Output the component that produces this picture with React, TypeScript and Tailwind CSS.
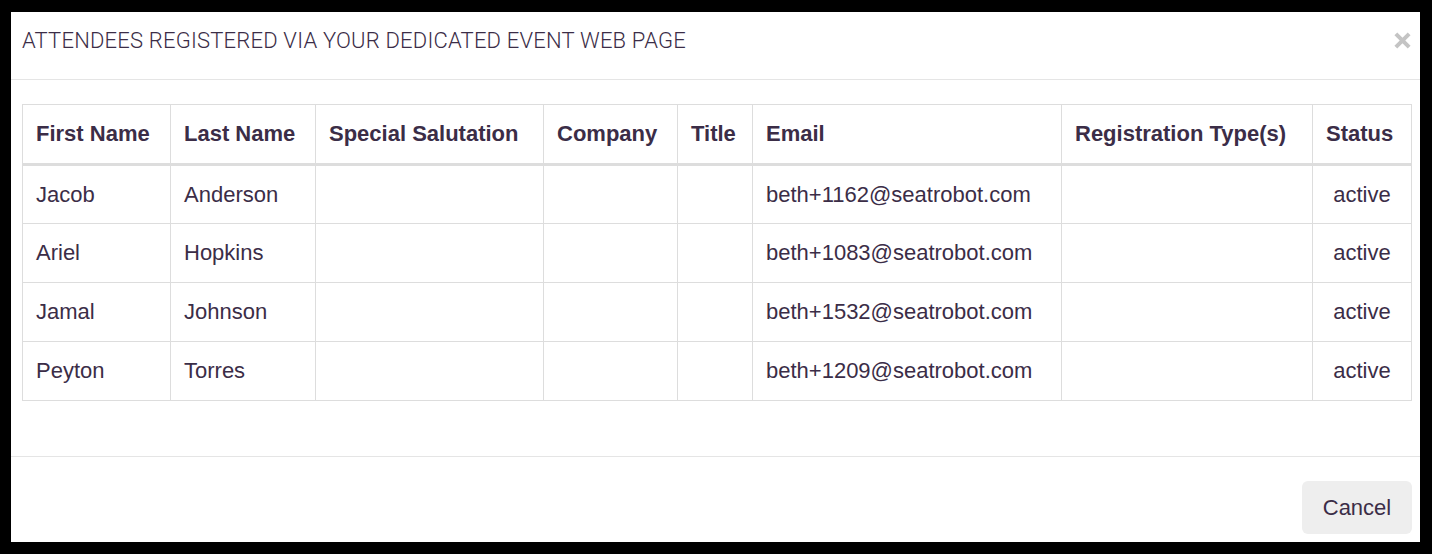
import React from "react"

const columns = [
  { label: "First Name", w: "w-[148px]" },
  { label: "Last Name", w: "w-[145px]" },
  { label: "Special Salutation", w: "w-[228px]" },
  { label: "Company", w: "w-[134px]" },
  { label: "Title", w: "w-[75px]" },
  { label: "Email", w: "w-[309px]" },
  { label: "Registration Type(s)", w: "w-[251px]" },
  { label: "Status", w: "w-[99px]" },
]

const attendees = [
  { first: "Jacob", last: "Anderson", email: "beth+1162@seatrobot.com", status: "active" },
  { first: "Ariel", last: "Hopkins", email: "beth+1083@seatrobot.com", status: "active" },
  { first: "Jamal", last: "Johnson", email: "beth+1532@seatrobot.com", status: "active" },
  { first: "Peyton", last: "Torres", email: "beth+1209@seatrobot.com", status: "active" },
]

export default function App() {
  return (
    <div className="w-[1432px] h-[554px] bg-black pt-[12px] pl-[11px] text-[#3b2d47] font-['Liberation_Sans',Arial,sans-serif]">
      <div className="w-[1409px] h-[530px] bg-white flex flex-col">
        {/* header */}
        <div className="h-[68px] border-b border-[#e5e5e5] flex items-center justify-between pl-[11px] pr-[8px] shrink-0">
          <h4 className="font-['Roboto',sans-serif] font-light text-[22px] tracking-[0.2px] uppercase pb-[10px]">
            Attendees registered via your dedicated event web page
          </h4>
          <button className="text-[#c4c4c4] mb-[10px]">
            <svg width="19" height="19" viewBox="0 0 20 20">
              <path d="M3 3 L17 17 M17 3 L3 17" stroke="currentColor" strokeWidth="4.2" />
            </svg>
          </button>
        </div>

        {/* body */}
        <div className="pt-[24px] pl-[11px] pb-[55px] shrink-0">
          <table className="table-fixed border-collapse w-[1389px] text-[22px] leading-none">
            <colgroup>
              {columns.map((c) => (
                <col key={c.label} className={c.w} />
              ))}
            </colgroup>
            <thead>
              <tr>
                {columns.map((c) => (
                  <th
                    key={c.label}
                    className="h-[60px] border border-[#dddddd] border-b-[3px] px-[13px] text-left font-bold align-middle"
                  >
                    {c.label}
                  </th>
                ))}
              </tr>
            </thead>
            <tbody>
              {attendees.map((a) => (
                <tr key={a.email}>
                  <td className="h-[59px] border border-[#dddddd] px-[13px] align-middle">{a.first}</td>
                  <td className="border border-[#dddddd] px-[13px] align-middle">{a.last}</td>
                  <td className="border border-[#dddddd] px-[13px]"></td>
                  <td className="border border-[#dddddd] px-[13px]"></td>
                  <td className="border border-[#dddddd] px-[13px]"></td>
                  <td className="border border-[#dddddd] px-[13px] align-middle">{a.email}</td>
                  <td className="border border-[#dddddd] px-[13px]"></td>
                  <td className="border border-[#dddddd] px-[13px] text-center align-middle">{a.status}</td>
                </tr>
              ))}
            </tbody>
          </table>
        </div>

        {/* footer */}
        <div className="border-t border-[#e5e5e5] flex justify-end pt-[24px] pr-[8px]">
          <button className="w-[110px] h-[53px] rounded-[6px] bg-[#eeeeee] text-[22px] text-[#3b2d47]">
            Cancel
          </button>
        </div>
      </div>
    </div>
  )
}
